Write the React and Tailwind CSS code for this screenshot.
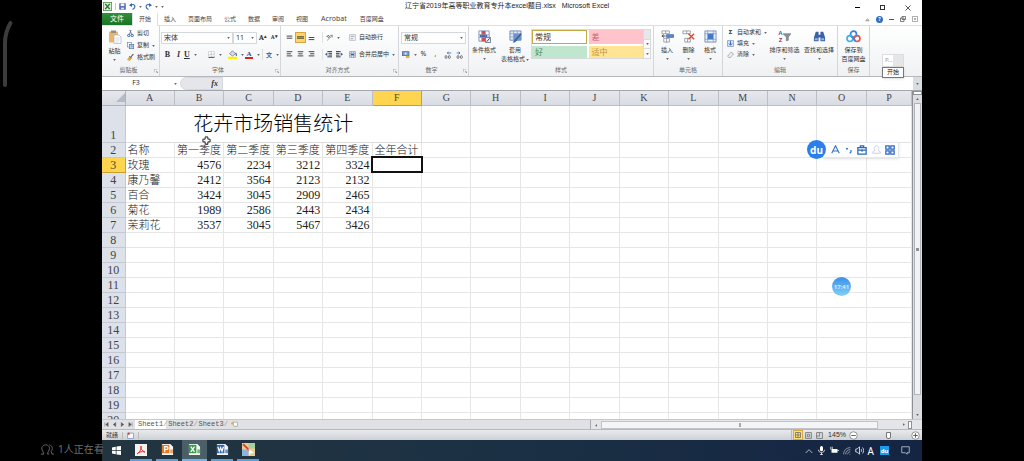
import { useState } from "react"

const columns = ["A", "B", "C", "D", "E", "F", "G", "H", "I", "J", "K", "L", "M", "N", "O", "P"]

const sheet = {
  2: ["名称", "第一季度", "第二季度", "第三季度", "第四季度", "全年合计"],
  3: ["玫瑰", 4576, 2234, 3212, 3324],
  4: ["康乃馨", 2412, 3564, 2123, 2132],
  5: ["百合", 3424, 3045, 2909, 2465],
  6: ["菊花", 1989, 2586, 2443, 2434],
  7: ["茉莉花", 3537, 3045, 5467, 3426],
}

const rowNumbers = Array.from({ length: 19 }, (_, i) => i + 2)

const tabs = ["开始", "插入", "页面布局", "公式", "数据", "审阅", "视图", "Acrobat", "百度网盘"]

function Caret() {
  return (
    <svg viewBox="0 0 4 3" className="h-[2px] w-[3px] shrink-0" aria-hidden="true">
      <path d="M0 0h4L2 3z" fill="#666" />
    </svg>
  )
}

function Icon({ children, className = "size-[9px]", box = "0 0 12 12" }) {
  return (
    <svg viewBox={box} className={`shrink-0 ${className}`} fill="none" aria-hidden="true">
      {children}
    </svg>
  )
}

/* ---------- ribbon icons ---------- */

function ExcelIcon() {
  return (
    <Icon className="size-[9px]">
      <rect x="0.5" y="0.5" width="11" height="11" fill="#dcebd6" stroke="#4f8a4a" />
      <path d="M3 2.5l6 7M9 2.5l-6 7" stroke="#237a35" strokeWidth="2" />
    </Icon>
  )
}

function SaveIcon() {
  return (
    <Icon className="size-[7px]">
      <path d="M1 1h10v10H1z" fill="#5c78bd" stroke="#3f5796" />
      <path d="M3 1h6v4H3z" fill="#fff" />
      <path d="M3.500 8h5v3h-5z" fill="#dfe6f5" />
    </Icon>
  )
}

function UndoIcon({ flip }) {
  return (
    <Icon className={flip ? "size-[7px] -scale-x-100" : "size-[7px]"}>
      <path d="M3 4c4-3 8-1 7 3-.4 2-2 3-4 4" stroke="#3768b8" strokeWidth="2" />
      <path d="M0 4l5-4v7z" fill="#3768b8" />
    </Icon>
  )
}

function PasteIcon() {
  return (
    <Icon className="size-[14px]" box="0 0 14 14">
      <rect x="1" y="1.500" width="9" height="11" rx="1" fill="#e9b767" />
      <rect x="3" y="0.500" width="5" height="2.500" fill="#8f8f8f" />
      <path d="M6 5h5l2 2v6.500H6z" fill="#fff" stroke="#a9b3c4" strokeWidth="0.700" />
      <path d="M7.500 8h4M7.500 10h4M7.500 12h3" stroke="#b7c0cf" strokeWidth="0.600" />
    </Icon>
  )
}

function ScissorsIcon() {
  return (
    <Icon className="size-[7px]">
      <path d="M4 8l3-8M8 8L5 0" stroke="#5a6f96" strokeWidth="1.500" />
      <circle cx="3" cy="9.500" r="2" stroke="#2c5aa5" strokeWidth="1.600" />
      <circle cx="9" cy="9.500" r="2" stroke="#2c5aa5" strokeWidth="1.600" />
    </Icon>
  )
}

function CopyIcon() {
  return (
    <Icon className="size-[7px]">
      <rect x="0.500" y="0.500" width="7" height="8" fill="#fff" stroke="#5578b5" />
      <rect x="4.500" y="4" width="7" height="7.500" fill="#dbe6f8" stroke="#3c62a8" />
      <path d="M6 6.500h4M6 8.500h4" stroke="#3c62a8" />
    </Icon>
  )
}

function BrushIcon() {
  return (
    <Icon className="size-[7px]">
      <path d="M11 0L6 6" stroke="#555" strokeWidth="2" />
      <path d="M4 4l4 3-3 5-5-2z" fill="#d9a83e" />
      <path d="M4 4l4 3" stroke="#555" strokeWidth="1.500" />
    </Icon>
  )
}

function BorderIcon() {
  return (
    <Icon className="size-[7px]">
      <path d="M1 1h10v10H1zM6 1v10M1 6h10" stroke="#a5a5a5" strokeDasharray="1.500 1" />
      <path d="M1 11h10" stroke="#444" strokeWidth="1.500" />
    </Icon>
  )
}

function FillIcon() {
  return (
    <Icon className="size-[9px]">
      <path d="M2 5l4-4 4 4-4 3z" fill="#d6dce8" stroke="#6f7789" />
      <path d="M10 4c2 2 1 3 1 4" stroke="#3d6cb7" strokeWidth="1.500" />
      <path d="M0 9h12v3H0z" fill="#fdf000" />
    </Icon>
  )
}

function AlignIcon({ d }) {
  return (
    <Icon className="size-[7px]" box="0 0 10 10">
      <path d={d} stroke="#444" strokeWidth="1.400" />
    </Icon>
  )
}

function OrientationIcon() {
  return (
    <Icon className="size-[7px]">
      <path d="M2 11L10 3M7 2.500l4-.500-.500 4" stroke="#777" strokeWidth="1.300" />
      <path d="M1 5l3-3 3 4M2 4l3 3" stroke="#333" strokeWidth="1.200" />
    </Icon>
  )
}

function IndentIcon({ flip }) {
  return (
    <Icon className={flip ? "size-[7px] -scale-x-100" : "size-[7px]"}>
      <path d="M4 1h8M6 4h6M6 7h6M4 10h8" stroke="#333" strokeWidth="1.600" />
      <path d="M0 5.500l4-3v6z" fill="#2f5ca6" />
    </Icon>
  )
}

function WrapIcon() {
  return (
    <Icon className="size-[7px]">
      <path d="M1 1h10v10H1z" fill="#f4f6fa" stroke="#9aa3b3" />
      <path d="M3 4h6M3 8h4" stroke="#667" />
    </Icon>
  )
}

function MergeIcon() {
  return (
    <Icon className="size-[7px]">
      <path d="M1 1h10v10H1zM1 4h10M1 8h10M4 1v3M8 1v3M4 8v3M8 8v3" fill="#f3f6fb" stroke="#6d7f9e" />
      <path d="M3 6h6" stroke="#2f5ca6" strokeWidth="2" />
    </Icon>
  )
}

function CurrencyIcon() {
  return (
    <Icon className="size-[8px]">
      <rect x="0.500" y="1" width="10" height="6" fill="#7b9bd0" stroke="#3e609f" />
      <circle cx="5.500" cy="4" r="1.600" fill="#dfe8f7" />
      <ellipse cx="8.500" cy="9" rx="3" ry="2" fill="#e6b23f" />
    </Icon>
  )
}

function DecimalIcon({ flip }) {
  return (
    <Icon className="size-[8px]">
      <path d={flip ? "M11 3H5M7 1L5 3l2 2" : "M1 3h5M4 1l2 2-2 2"} stroke="#3a66ab" strokeWidth="1.200" />
      <ellipse cx="3" cy="9" rx="1.500" ry="2.200" stroke="#444" />
      <ellipse cx="8" cy="9" rx="1.500" ry="2.200" stroke="#444" />
    </Icon>
  )
}

function ConditionalIcon() {
  return (
    <Icon className="size-[13px]" box="0 0 14 14">
      <path d="M1 1h11v11H1z" fill="#fff" stroke="#7d90b6" />
      <path d="M4 1h4v4H4zM4 8h4v4H4z" fill="#d94a4a" />
      <path d="M2 5h8v3H2z" fill="#3e67b1" />
      <path d="M1 5h11M1 8h11M4 1v11M8 1v11" stroke="#7d90b6" strokeWidth="0.600" />
      <path d="M8 8h5.500v5.500H8z" fill="#eef2fa" stroke="#4d5d80" strokeWidth="0.800" />
      <path d="M9.500 12.500l3-3.500" stroke="#333" />
    </Icon>
  )
}

function TableFormatIcon() {
  return (
    <Icon className="size-[13px]" box="0 0 14 14">
      <path d="M1 1h12v10H1z" fill="#dbe7f8" stroke="#6f8cc0" />
      <path d="M5 4h8v7H5z" fill="#6b93d3" />
      <path d="M1 4h12M1 7.500h12M5 1v10M9 1v10" stroke="#7b93bd" strokeWidth="0.700" />
      <path d="M13 4L8 10" stroke="#40557f" strokeWidth="1.400" />
      <path d="M7 9l2 2-3 2.500H4z" fill="#3465b5" />
    </Icon>
  )
}

function CellsIcon({ kind }) {
  return (
    <Icon className="size-[13px]" box="0 0 14 14">
      {kind === "format" ? (
        <>
          <path d="M1 1h12v12H1z" fill="#eaf0fa" stroke="#7a90b8" />
          <path d="M1 4h12M1 10h12M4 1v12M10 1v12" stroke="#7a90b8" strokeWidth="0.700" />
          <path d="M4 4h6v6H4z" fill="#4377c7" />
        </>
      ) : (
        <>
          <path d="M1 1h8v3H1zM5 1v3" fill="#fff" stroke="#7c8698" strokeWidth="0.800" />
          <path d="M3 9h6v4H3zM6 9v4" fill="#fff" stroke="#7c8698" strokeWidth="0.800" />
          {kind === "insert" ? (
            <>
              <path d="M6 5h7.500v3H6z" fill="#5c8ad1" stroke="#2f5ca6" strokeWidth="0.700" />
              <path d="M1 6.500h4M3 5L1 6.500 3 8" stroke="#444" />
            </>
          ) : (
            <path d="M7 4l6 6M13 4l-6 6" stroke="#d94a32" strokeWidth="1.500" />
          )}
        </>
      )}
    </Icon>
  )
}

function SortIcon() {
  return (
    <span className="flex h-[13px] items-center">
      <span className="flex flex-col font-['Liberation_Sans'] text-[6px] leading-[7px] font-bold">
        <span className="text-[#3465b5]">A</span>
        <span className="text-[#a03030]">Z</span>
      </span>
      <Icon className="size-[8px]">
        <path d="M0 1h12L8 6v5l-3 1V6z" fill="#8b8f98" stroke="#5e6168" strokeWidth="0.700" />
      </Icon>
    </span>
  )
}

function BinocularsIcon() {
  return (
    <Icon className="size-[13px]" box="0 0 14 14">
      <path d="M3 2h3v3h2V2h3l2 6v4H8V8H6v4H1V8z" fill="#3d63a6" />
      <path d="M2 9h3v2H2zM9 9h3v2H9z" fill="#9db7e2" />
    </Icon>
  )
}

function CloudIcon() {
  return (
    <Icon className="h-[13px] w-[15px]" box="0 0 16 14">
      <circle cx="8" cy="4.500" r="3.200" stroke="#2f86e8" strokeWidth="1.800" />
      <circle cx="4.200" cy="9.200" r="3.200" stroke="#39b3e8" strokeWidth="1.800" />
      <circle cx="11.800" cy="9.200" r="3.200" stroke="#e2574f" strokeWidth="1.800" />
      <path d="M6 7l4 4.500" stroke="#2f86e8" strokeWidth="1.500" />
    </Icon>
  )
}

/* ---------- ribbon pieces ---------- */

function Group({ label, launcher, className, children }) {
  return (
    <section className={`flex shrink-0 flex-col border-r border-[#d3d6da] ${className}`}>
      <div className="h-[39px]">{children}</div>
      <div className="flex h-[11px] items-center px-px text-[6px] text-[#666]">
        <span className="flex-1 text-center">{label}</span>
        {launcher && (
          <svg viewBox="0 0 6 6" className="size-[4px]" fill="none" stroke="#888" aria-hidden="true">
            <path d="M0 5V0h5M3 3l3 3M6 3v3H3" />
          </svg>
        )}
      </div>
    </section>
  )
}

function BigButton({ icon, lines, caret, inlineCaret, className }) {
  return (
    <button type="button" className={`flex shrink-0 flex-col items-center pt-[4px] ${className}`}>
      {icon}
      <span className="mt-[3px] leading-[9px] whitespace-nowrap">{lines[0]}</span>
      {lines[1] && (
        <span className="flex items-center gap-px leading-[9px] whitespace-nowrap">
          {lines[1]}
          {inlineCaret && <Caret />}
        </span>
      )}
      {caret && (
        <span className="flex h-[8px] items-center">
          <Caret />
        </span>
      )}
    </button>
  )
}

function SmallButton({ icon, label, caret }) {
  return (
    <button type="button" className="flex items-center gap-[3px] whitespace-nowrap">
      <span className="flex w-[7px] justify-center">{icon}</span>
      {label}
      {caret && <Caret />}
    </button>
  )
}

function Tool({ label, active, caret, children }) {
  return (
    <button
      type="button"
      aria-label={label}
      className={
        active
          ? "flex h-[11px] w-[11px] items-center justify-center border border-[#d9a53a] bg-[#ffd564]"
          : "flex h-[11px] min-w-[11px] items-center justify-center gap-[4px]"
      }
    >
      {children}
      {caret && <Caret />}
    </button>
  )
}

function Picker({ label, value, className }) {
  return (
    <span className={`flex h-[12px] items-center border border-[#d5d8dd] bg-white pr-[2px] ${className}`}>
      <select aria-label={label} defaultValue={value} className="min-w-0 flex-1 appearance-none bg-transparent px-[2px] text-[7px] leading-[10px] outline-none">
        <option>{value}</option>
      </select>
      <Caret />
    </span>
  )
}

function Ribbon() {
  return (
    <div className="relative flex h-[51px] overflow-hidden border-b border-[#b4b7bc] bg-linear-to-b from-white to-[#eff1f3] text-[6px] text-[#333]">
      <Group label="剪贴板" launcher className="w-[58px]">
        <div className="flex">
          <BigButton icon={<PasteIcon />} lines={["粘贴"]} caret className="w-[25px]" />
          <div className="flex flex-col gap-[3px] pt-[3px]">
            <SmallButton icon={<ScissorsIcon />} label="剪切" />
            <SmallButton icon={<CopyIcon />} label="复制" caret />
            <SmallButton icon={<BrushIcon />} label="格式刷" />
          </div>
        </div>
      </Group>

      <Group label="字体" launcher className="w-[121px]">
        <div className="flex items-center pt-[6px] pl-px">
          <Picker label="字体" value="宋体" className="w-[72px]" />
          <Picker label="字号" value="11" className="w-[24px]" />
          <div className="flex flex-1 justify-around font-serif text-[8px] leading-[10px] font-bold">
            <Tool label="增大字号">A<sup className="-ml-[4px] text-[5px]">▴</sup></Tool>
            <Tool label="减小字号"><span className="text-[6px]">A</span><sup className="-ml-[4px] text-[5px]">▾</sup></Tool>
          </div>
        </div>
        <div className="flex items-center pt-[5px] pl-[2px] font-['Liberation_Serif'] text-[8px] font-bold">
          <Tool label="加粗">B</Tool>
          <Tool label="倾斜"><i>I</i></Tool>
          <span className="flex w-[24px]"><Tool label="下划线" caret><u>U</u></Tool></span>
          <span className="flex w-[20px]"><Tool label="边框" caret><BorderIcon /></Tool></span>
          <span className="flex w-[17px]"><Tool label="填充颜色" caret><FillIcon /></Tool></span>
          <span className="flex w-[17px]">
            <Tool label="字体颜色" caret>
              <span className="w-[8px] border-b-2 border-[#e01f1f] text-[7px] leading-[6px] text-[#2e4d85]">A</span>
            </Tool>
          </span>
          <span className="flex border-l border-[#ddd] pl-[3px] font-['Noto_Sans_CJK_SC'] text-[6px] text-[#3b5b96]">
            <Tool label="拼音" caret>文</Tool>
          </span>
        </div>
      </Group>

      <Group label="对齐方式" launcher className="w-[118px]">
        <div className="flex items-center pt-[6px] pl-[3px]">
          <Tool label="顶端对齐"><AlignIcon d="M1 3h8M1 6h8" /></Tool>
          <Tool label="垂直居中" active><AlignIcon d="M0 4h10M0 6h10" /></Tool>
          <Tool label="底端对齐"><AlignIcon d="M1 5h8M1 8h8" /></Tool>
          <span className="ml-[5px] flex w-[27px] border-l border-[#e2e2e2] pl-[3px]">
            <Tool label="方向" caret><OrientationIcon /></Tool>
          </span>
          <SmallButton icon={<WrapIcon />} label="自动换行" />
        </div>
        <div className="flex items-center pt-[6px] pl-[3px]">
          <Tool label="左对齐"><AlignIcon d="M1 1h8M1 4h6M1 7h8" /></Tool>
          <Tool label="居中"><AlignIcon d="M1 1h8M2 4h6M1 7h8" /></Tool>
          <Tool label="右对齐"><AlignIcon d="M1 1h8M3 4h6M1 7h8" /></Tool>
          <span className="ml-[5px] flex w-[27px] border-l border-[#e2e2e2]">
            <Tool label="减少缩进"><IndentIcon /></Tool>
            <Tool label="增加缩进"><IndentIcon flip /></Tool>
          </span>
          <SmallButton icon={<MergeIcon />} label="合并后居中" caret />
        </div>
      </Group>

      <Group label="数字" launcher className="w-[70px]">
        <div className="flex px-[2px] pt-[6px]">
          <Picker label="数字格式" value="常规" className="flex-1" />
        </div>
        <div className="flex items-center justify-between px-[3px] pt-[5px] text-[7px]">
          <Tool label="会计数字格式" caret><CurrencyIcon /></Tool>
          <Tool label="百分比">%</Tool>
          <Tool label="千位分隔">,</Tool>
          <Tool label="增加小数位"><DecimalIcon flip /></Tool>
          <Tool label="减少小数位"><DecimalIcon /></Tool>
        </div>
      </Group>

      <Group label="样式" className="w-[185px]">
        <div className="flex">
          <BigButton icon={<ConditionalIcon />} lines={["条件格式"]} caret className="w-[30px]" />
          <BigButton icon={<TableFormatIcon />} lines={["套用", "表格格式"]} inlineCaret className="w-[32px]" />
          <div className="mt-[3px] flex h-[30px] w-[120px] border border-[#d8dade] bg-white text-[8px] leading-[10px]">
            <div className="grid flex-1 grid-cols-2 gap-[2px]">
              <button type="button" className="border border-[#c4a947] bg-white px-[2px] text-left text-[#333]">常规</button>
              <button type="button" className="bg-[#ffc3cb] px-[3px] text-left text-[#c9606c]">差</button>
              <button type="button" className="bg-[#c0e6cd] px-[3px] text-left text-[#4f8a5f]">好</button>
              <button type="button" className="bg-[#ffe493] px-[3px] text-left text-[#c1903a]">适中</button>
            </div>
            <div className="flex w-[7px] flex-col divide-y divide-[#d8dade] border-l border-[#d8dade] bg-[#fafafa]">
              <span className="flex-1 bg-[#e6e7ea]" />
              <span className="flex flex-1 items-center justify-center"><Caret /></span>
              <span className="flex flex-1 items-center justify-center"><Caret /></span>
            </div>
          </div>
        </div>
      </Group>

      <Group label="单元格" className="w-[69px]">
        <div className="flex pl-[2px]">
          <BigButton icon={<CellsIcon kind="insert" />} lines={["插入"]} caret className="w-[22px]" />
          <BigButton icon={<CellsIcon kind="delete" />} lines={["删除"]} caret className="w-[21px]" />
          <BigButton icon={<CellsIcon kind="format" />} lines={["格式"]} caret className="w-[22px]" />
        </div>
      </Group>

      <Group label="编辑" className="w-[115px]">
        <div className="flex pl-[4px]">
          <div className="flex w-[40px] flex-col gap-[2px] pt-[2px]">
            <SmallButton icon={<b>Σ</b>} label="自动求和" caret />
            <SmallButton
              icon={
                <Icon className="size-[7px]">
                  <path d="M1 1h10v10H1z" fill="#dfe9f8" stroke="#4d76bd" />
                  <path d="M6 2v6M3.500 6L6 9l2.500-3" stroke="#2452a0" strokeWidth="1.500" />
                </Icon>
              }
              label="填充"
              caret
            />
            <SmallButton
              icon={
                <Icon className="size-[7px]">
                  <path d="M1 9l6-7 4 3-5 6H3z" fill="#f2f2f5" stroke="#787d88" />
                </Icon>
              }
              label="清除"
              caret
            />
          </div>
          <BigButton icon={<SortIcon />} lines={["排序和筛选"]} caret className="w-[35px]" />
          <BigButton icon={<BinocularsIcon />} lines={["查找和选择"]} caret className="w-[34px]" />
        </div>
      </Group>

      <Group label="保存" className="w-[32px]">
        <BigButton icon={<CloudIcon />} lines={["保存到", "百度网盘"]} className="w-full" />
      </Group>
    </div>
  )
}

function TitleBar() {
  return (
    <header className="flex h-[13px] items-center bg-white">
      <div className="flex flex-1 items-center gap-[3px] pl-px">
        <ExcelIcon />
        <span className="h-[7px] border-l border-[#ccc]" />
        <SaveIcon />
        <UndoIcon />
        <Caret />
        <UndoIcon flip />
        <Caret />
        <Caret />
      </div>
      <h1 className="font-['Liberation_Sans','Noto_Sans_CJK_SC',sans-serif] text-[7px] whitespace-pre text-[#222]">辽宁省2019年高等职业教育专升本excel题目.xlsx   Microsoft Excel</h1>
      <div className="flex flex-1 items-center justify-end gap-[20px] pt-[2px] pr-[11px]">
        <button type="button" aria-label="最小化" className="h-px w-[5px] bg-black" />
        <button type="button" aria-label="还原" className="size-[5px] border border-[#333]" />
        <button type="button" aria-label="关闭">
          <Icon className="size-[6px]">
            <path d="M1 1l10 10M11 1L1 11" stroke="#222" strokeWidth="1.500" />
          </Icon>
        </button>
      </div>
    </header>
  )
}

function TabBar() {
  return (
    <nav className="flex h-[13px] items-stretch border-b border-[#dcdfe3] bg-white text-[6px] text-[#444]">
      <button type="button" className="w-[30px] bg-linear-to-b from-[#2f8f3a] to-[#1b7427] text-[7px] text-white">文件</button>
      {tabs.map((t, i) => (
        <button
          key={t}
          type="button"
          className={
            i === 0
              ? "-mb-px w-[26px] border-x border-[#dcdfe3] bg-white"
              : t === "Acrobat"
                ? "px-[7px] font-['Noto_Sans'] text-[7px]"
                : "px-[6px]"
          }
        >
          {t}
        </button>
      ))}
      <div className="flex flex-1 items-center justify-end gap-[6px] pr-[4px]">
        <Icon className="size-[5px]"><path d="M2 9l4-5 4 5z" stroke="#666" strokeWidth="1.500" /></Icon>
        <button type="button" aria-label="帮助" className="flex size-[7px] items-center justify-center rounded-full bg-[#2f6fc4] text-[5px] leading-none font-bold text-white">?</button>
        <span className="h-px w-[5px] bg-[#555]" />
        <Icon className="size-[6px]"><path d="M4 1h7v6H4zM1 4h7v7H1z" fill="#fff" stroke="#555" strokeWidth="1.500" /></Icon>
        <Icon className="size-[6px]"><path d="M1 1h10v10H1zM4 4l4 4M8 4l-4 4" stroke="#777" strokeWidth="1.200" /></Icon>
      </div>
    </nav>
  )
}

function FormulaBar() {
  return (
    <div className="flex h-[14px] items-stretch border-b border-[#a3a6ab] bg-white text-[6px]">
      <input aria-label="名称框" defaultValue="F3" className="w-[68px] bg-white text-center text-[7px] text-[#333] outline-none" />
      <span className="flex w-[10px] items-center justify-center"><Caret /></span>
      <span className="flex w-[43px] items-center justify-end rounded-l-full border border-[#d4d7dc] bg-[#e4e6ea] pr-[4px] font-['Liberation_Serif'] text-[8px] font-bold text-[#333] italic">fx</span>
      <input aria-label="编辑栏" className="min-w-0 flex-1 bg-white outline-none" />
      <span className="flex w-[9px] items-center justify-center bg-[#d9dce1]"><Caret /></span>
    </div>
  )
}

function Grid() {
  return (
    <table className="w-full table-fixed border-collapse font-['Liberation_Serif','Noto_Sans_CJK_SC',serif] text-[12px] leading-[14px] text-[#222]">
      <colgroup>
        <col className="w-[23px]" />
        {columns.map((c) => (
          <col key={c} className={c === "P" ? "w-[45px]" : ""} />
        ))}
      </colgroup>
      <thead>
        <tr className="h-[14px] bg-linear-to-b from-[#e6e8ec] to-[#d9dce4]">
          <th className="border-r border-b border-[#aeb4bf] p-0">
            <svg viewBox="0 0 10 10" className="ml-auto size-[9px]" aria-hidden="true">
              <path d="M10 0v10H0z" fill="#b4bac6" />
            </svg>
          </th>
          {columns.map((c) => (
            <th
              key={c}
              scope="col"
              className={
                c === "F"
                  ? "border-r border-b border-[#c9a02f] bg-[#ffd44f] p-0 text-[10px] leading-[13px] font-normal text-[#5a4a1a]"
                  : "border-r border-b border-[#b9bec8] p-0 text-[10px] leading-[13px] font-normal text-[#444]"
              }
            >
              {c}
            </th>
          ))}
        </tr>
      </thead>
      <tbody>
        <tr className="h-[37px]">
          <th scope="row" className="border-r border-b border-[#c3c8d3] bg-[#dde1ea] p-0 align-bottom font-normal text-[#444]">1</th>
          <td colSpan={6} className="border-r border-b border-[#dcdcdc] p-0 text-center text-[20px] leading-[34px] font-light text-black">花卉市场销售统计</td>
          {columns.slice(6).map((c) => (
            <td key={c} className="border-r border-b border-[#e2e2e2] p-0" />
          ))}
        </tr>
        {rowNumbers.map((n) => (
          <tr key={n} className="h-[15px]">
            <th
              scope="row"
              className={
                n === 3
                  ? "border-r border-b border-[#c9a02f] bg-[#ffd44f] p-0 font-normal text-[#5a4a1a]"
                  : "border-r border-b border-[#c3c8d3] bg-[#dde1ea] p-0 font-normal text-[#444]"
              }
            >
              {n}
            </th>
            {columns.map((c, i) => {
              const value = sheet[n]?.[i]
              const selected = n === 3 && c === "F"
              return (
                <td
                  key={c}
                  className={
                    selected
                      ? "border-r border-b border-[#e6e6e6] p-0 outline-2 -outline-offset-1 outline-[#111]"
                      : typeof value === "number"
                        ? "border-r border-b border-[#e6e6e6] p-0 pr-[2px] text-right"
                        : "h-[15px] border-r border-b border-[#e6e6e6] p-0 pl-[2px] text-[11px] leading-[14px] font-light whitespace-nowrap"
                  }
                >
                  {value}
                </td>
              )
            })}
          </tr>
        ))}
      </tbody>
    </table>
  )
}

function VerticalScroll() {
  return (
    <div className="flex w-[10px] shrink-0 flex-col items-center border-l border-[#8d9097] bg-[#dcdde1]">
      <span className="h-[4px] w-full border border-[#8d9097] bg-white" />
      <span className="flex h-[8px] items-center"><span className="rotate-180"><Caret /></span></span>
      <span className="flex w-[7px] flex-1 items-center justify-center border border-[#b0b4ba] bg-[#f1f2f4]">
        <span className="size-[3px] bg-[#8d9097]" />
      </span>
      <span className="h-[16px]" />
      <span className="flex h-[8px] items-center"><Caret /></span>
    </div>
  )
}

function SheetTabs({ active, onSelect }) {
  return (
    <div className="flex h-[10px] items-stretch border-t border-[#c4c7cc] bg-[#dfe1e5] font-['Liberation_Mono'] text-[7px] leading-[9px] text-[#555]">
      <div className="flex w-[33px] items-center justify-around px-px">
        {["M2 1v10M10 1L4 6l6 5z", "M9 1L3 6l6 5z", "M3 1l6 5-6 5z", "M10 1v10M2 1l6 5-6 5z"].map((d) => (
          <Icon key={d} className="size-[5px]">
            <path d={d} fill="#555" stroke="#555" />
          </Icon>
        ))}
      </div>
      {["Sheet1", "Sheet2", "Sheet3"].map((name) => (
        <button
          key={name}
          type="button"
          onClick={() => onSelect(name)}
          className={active === name ? "flex bg-white pl-[3px]" : "flex pl-[2px]"}
        >
          {name}
          <span className="w-[3px] text-[#999]">/</span>
        </button>
      ))}
      <span className="ml-[4px] flex items-center">
        <Icon className="size-[7px]">
          <path d="M3 2h8v7H5z" fill="#fff" stroke="#888" />
          <circle cx="2.500" cy="4" r="2" fill="#e9a63a" />
        </Icon>
      </span>
      <div className="flex-1" />
      <div className="flex w-[332px] items-center border-l border-[#a6a9af] bg-[#e3e5e8] pr-[10px]">
        <span className="flex w-[10px] rotate-90 justify-center"><Caret /></span>
        <span className="flex h-[8px] flex-1 items-center justify-center border border-[#c0c3c8] bg-[#f4f5f6]">
          <span className="h-[4px] w-[2px] bg-[#a6a9af]" />
        </span>
        <span className="w-[22px]" />
        <span className="flex w-[8px] -rotate-90 justify-center"><Caret /></span>
        <span className="h-[8px] w-[4px] border border-[#8d9097] bg-white" />
      </div>
    </div>
  )
}

function StatusBar() {
  return (
    <div className="flex h-[11px] items-center border-t border-[#b5b8bd] bg-linear-to-b from-[#e9eaed] to-[#cdd0d6] text-[6px] text-[#333]">
      <span className="px-[4px]">就绪</span>
      <span className="flex items-center border-x border-[#bbb] px-[4px]">
        <Icon className="size-[7px]">
          <path d="M1 2h10v9H1z" fill="#fff" stroke="#4f74b8" />
          <circle cx="3" cy="3" r="2" fill="#d0473c" />
        </Icon>
      </span>
      <div className="flex-1" />
      <span className="flex items-center border-l border-[#bbb] pl-px">
        <button type="button" aria-label="普通" className="border border-[#dba93a] bg-[#ffdf7d] p-px">
          <Icon className="size-[6px]"><path d="M1 1h10v10H1zM1 6h10M6 1v10" stroke="#666" strokeWidth="1.500" /></Icon>
        </button>
        <button type="button" aria-label="页面布局视图" className="p-[2px]">
          <Icon className="size-[7px]"><path d="M1 1h10v10H1zM4 4h4v4H4z" stroke="#777" strokeWidth="1.500" /></Icon>
        </button>
        <button type="button" aria-label="分页预览" className="p-[2px]">
          <Icon className="size-[7px]"><path d="M1 1h10v10H1zM6 1v6M1 7h5" stroke="#777" strokeWidth="1.500" /></Icon>
        </button>
      </span>
      <span className="px-[3px] font-['Liberation_Sans'] text-[7px]">145%</span>
      <button type="button" aria-label="缩小">
        <Icon className="size-[9px]">
          <circle cx="6" cy="6" r="5" fill="#fff" stroke="#777" />
          <path d="M3 6h6" stroke="#555" strokeWidth="1.200" />
        </Icon>
      </button>
      <input type="range" aria-label="显示比例" min="0" max="100" defaultValue="58" className="mx-px h-[7px] w-[51px] appearance-none bg-transparent [&::-webkit-slider-runnable-track]:h-[7px] [&::-webkit-slider-thumb]:h-[7px] [&::-webkit-slider-thumb]:w-[5px] [&::-webkit-slider-thumb]:appearance-none [&::-webkit-slider-thumb]:rounded-b-[2px] [&::-webkit-slider-thumb]:border [&::-webkit-slider-thumb]:border-[#777] [&::-webkit-slider-thumb]:bg-white" />
      <button type="button" aria-label="放大" className="mr-[2px]">
        <Icon className="size-[9px]">
          <circle cx="6" cy="6" r="5" fill="#fff" stroke="#777" />
          <path d="M3 6h6M6 3v6" stroke="#555" strokeWidth="1.200" />
        </Icon>
      </button>
    </div>
  )
}

function TaskApp({ label, active, children }) {
  return (
    <button
      type="button"
      aria-label={label}
      className={
        active
          ? "flex w-[25px] items-center justify-center border-b-2 border-[#6fb4ea] bg-[#4b5f69]"
          : "flex w-[22px] items-center justify-center border-b-2 border-[#5a9fd8]"
      }
    >
      {children}
    </button>
  )
}

function OfficeIcon({ d, color }) {
  return (
    <Icon className="size-[13px]" box="0 0 14 14">
      <path d="M1 1h9l3 3v9H1z" fill="#f5f5f5" />
      <path d="M1 2h8v9H1z" fill={color} />
      <path d={d} stroke="#fff" strokeWidth="1.300" />
      <path d="M10 7h3v4h-3z" fill={color} opacity="0.700" />
    </Icon>
  )
}

function Taskbar() {
  return (
    <footer className="flex h-[21px] items-stretch bg-linear-to-r from-[#22353f] via-[#1b3044] to-[#142443]">
      <button type="button" aria-label="开始菜单" className="flex w-[28px] items-center justify-center">
        <Icon className="size-[9px]">
          <path d="M0 2l5-1v4.500H0zM6 .800L12 0v5.500H6zM0 6.500h5V11l-5-1zM6 6.500h6V12l-6-.800z" fill="#fff" />
        </Icon>
      </button>
      <div className="flex gap-[4px]">
        <TaskApp label="Adobe Acrobat">
          <Icon className="size-[12px]">
            <rect width="12" height="12" fill="#f6f1f1" />
            <path d="M2 10c3-2 5-6 4-8-1 2 1 5 4 6-3-1-6 0-8 2z" stroke="#d8332c" />
          </Icon>
        </TaskApp>
        <TaskApp label="PowerPoint"><OfficeIcon color="#e07a28" d="M4 10V4h2c2 0 2 3 0 3H4" /></TaskApp>
        <TaskApp label="Excel" active><OfficeIcon color="#3b9a4a" d="M3 4l4 5.500M7 4L3 9.500" /></TaskApp>
        <TaskApp label="Word"><OfficeIcon color="#2d63b5" d="M2 4l1.500 5L5 5l1.500 4L8 4" /></TaskApp>
        <TaskApp label="画板">
          <Icon className="size-[13px]">
            <rect width="12" height="12" fill="#e5cf94" />
            <path d="M0 6h6v6H0z" fill="#8ab6d9" />
            <path d="M6 0h6v5H6z" fill="#a5cfa0" />
            <path d="M1 1l7 7" stroke="#d8402f" strokeWidth="1.800" />
            <path d="M6 5l5 4-3 .500-1 2.500z" fill="#fff" />
          </Icon>
        </TaskApp>
      </div>
      <div className="flex flex-1 items-center justify-end gap-[4px] pr-[12px] text-white">
        <Icon className="size-[8px]"><path d="M1 9l5-5 5 5" stroke="#fff" /></Icon>
        <Icon className="size-[9px]">
          <rect x="4" y="0" width="4" height="7" rx="2" fill="#fff" />
          <path d="M2 5c0 5 8 5 8 0M6 9v3M4 11.500h4" stroke="#fff" />
        </Icon>
        <Icon className="size-[9px]">
          <path d="M2 4h8v5H2z" fill="#fff" />
          <path d="M10 6h2M1 1v4M3 1v3" stroke="#fff" />
        </Icon>
        <Icon className="size-[8px]"><path d="M1 11C1 5 5 1 11 1M4 11c0-4 3-7 7-7M7 11c0-2 2-4 4-4M10 11h1" stroke="#c8d0da" /></Icon>
        <Icon className="size-[9px]">
          <path d="M1 4h2l3-3v10L3 8H1z" stroke="#fff" />
          <path d="M8 4c1 1 1 3 0 4M10 2c2 2 2 6 0 8" stroke="#fff" />
        </Icon>
        <span className="text-[10px] leading-none">A</span>
        <span className="ml-[2px] flex size-[9px] items-center justify-center bg-[#1e9be8] text-[6px] leading-none font-bold">du</span>
        <Icon className="ml-[8px] size-[9px]"><path d="M1 1h10v8H8v2L6 9H1z" stroke="#cfd6e0" /></Icon>
      </div>
    </footer>
  )
}

// Baidu input method bar, floats over the sheet
function InputMethodBar() {
  return (
    <div className="absolute top-[140px] right-[23px] flex items-center">
      <span className="z-10 flex size-[19px] items-center justify-center rounded-full bg-[#2b7fec] text-[10px] leading-none font-bold text-white">du</span>
      <div className="-ml-[4px] flex h-[16px] w-[77px] items-center justify-between border border-[#e4e7ec] bg-white pr-[3px] pl-[8px] shadow-sm">
        <Icon className="size-[9px]"><path d="M1 11L6 1l5 10M3 8h6" stroke="#3472c8" strokeWidth="1.500" /></Icon>
        <Icon className="size-[8px]">
          <circle cx="3" cy="4" r="1.500" fill="#3472c8" />
          <path d="M9 6v3l-2 2" stroke="#3472c8" strokeWidth="1.800" />
        </Icon>
        <Icon className="size-[10px]"><path d="M1 3h10v8H1zM4 3V1h4v2M1 6h10M6 5v3" stroke="#2b66c0" strokeWidth="1.500" /></Icon>
        <Icon className="size-[9px]"><path d="M4 7C2 4 3 1 6 1s4 3 2 6l3 2v2H1V9z" stroke="#c3cde3" strokeWidth="1.200" /></Icon>
        <Icon className="size-[10px]"><path d="M1 1h4v4H1zM7 1h4v4H7zM1 7h4v4H1zM7 7h4v4H7z" stroke="#2b66c0" strokeWidth="1.500" /></Icon>
      </div>
    </div>
  )
}

function App() {
  const [activeSheet, setActiveSheet] = useState("Sheet1")

  return (
    <div className="relative flex min-h-screen bg-black font-['Noto_Sans','Noto_Sans_CJK_SC',sans-serif]">
      <aside className="w-[102px] shrink-0">
        <svg viewBox="0 0 14 90" className="h-[90px] w-[14px]" fill="none" aria-hidden="true">
          <path d="M10.500 23C7 29 5 35 5 43v42" stroke="#3c3c3c" strokeWidth="4" strokeLinecap="round" />
        </svg>
      </aside>

      <main className="relative flex min-w-0 flex-1 flex-col bg-white">
        <TitleBar />
        <TabBar />
        <Ribbon />
        <FormulaBar />
        <div className="flex flex-1 basis-[328px] overflow-hidden">
          <div className="h-[328px] min-w-0 flex-1 overflow-hidden">
            <Grid />
          </div>
          <VerticalScroll />
        </div>
        <SheetTabs active={activeSheet} onSelect={setActiveSheet} />
        <StatusBar />
        <Taskbar />

        <div className="absolute top-[54px] right-[18px] flex flex-col items-start">
          <div className="flex h-[13px] w-[22px] items-center justify-between border border-[#ddd] bg-white pl-[2px] text-[6px] text-[#999]">
            P...
            <span className="h-full w-[10px] bg-[#e6e6e6]" />
          </div>
          <span className="border border-[#777] bg-white px-[4px] text-[6px] leading-[9px] text-[#222] shadow-sm">开始</span>
        </div>

        <InputMethodBar />

        <span className="absolute top-[277px] right-[71px] flex size-[19px] items-center justify-center rounded-full bg-linear-to-b from-[#3b8fe8] to-[#7fd0fb] text-[6px] leading-none font-bold text-[#d5ecfd]">17:41</span>

        {/* mouse pointer */}
        <svg viewBox="0 0 10 10" className="absolute top-[136px] left-[100px] size-[9px]" aria-hidden="true">
          <path d="M3.500 1h3v2.500H9v3H6.500V9h-3V6.500H1v-3h2.500z" fill="#fff" stroke="#111" />
        </svg>
      </main>

      <div className="w-[102px] shrink-0" />

      <div className="absolute bottom-[4px] left-[40px] flex items-center gap-[4px] text-[10px] leading-[16px] text-[#6b7073]">
        <Icon className="h-[11px] w-[14px]" box="0 0 15 12">
          <path d="M1 11h3L3 8C0 4 3 1 6 1s6 3 3 7l-1 3h2M10 1c4 1 4 5 2 7l1 3h2" stroke="#6b7073" />
        </Icon>
        1人正在看
      </div>
    </div>
  )
}

export default App
